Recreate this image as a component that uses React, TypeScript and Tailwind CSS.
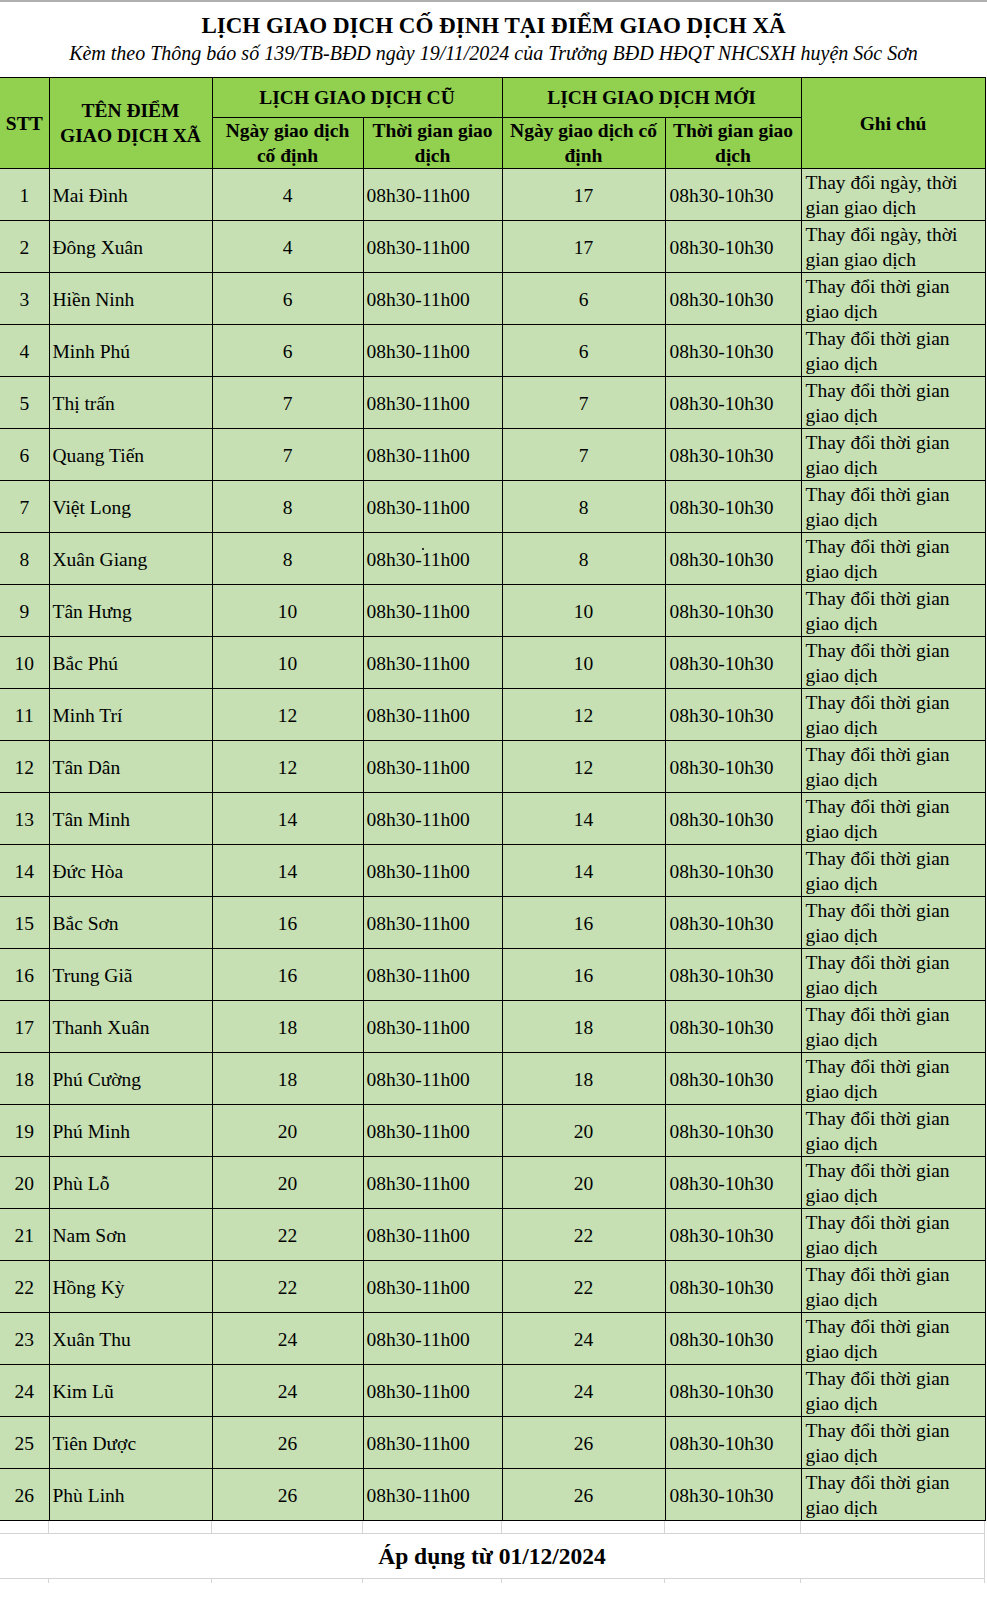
import React from 'react';

type Row = {
  stt: number;
  name: string;
  oldDay: number;
  newDay: number;
};

const rows: Row[] = [
  { stt: 1, name: 'Mai Đình', oldDay: 4, newDay: 17 },
  { stt: 2, name: 'Đông Xuân', oldDay: 4, newDay: 17 },
  { stt: 3, name: 'Hiền Ninh', oldDay: 6, newDay: 6 },
  { stt: 4, name: 'Minh Phú', oldDay: 6, newDay: 6 },
  { stt: 5, name: 'Thị trấn', oldDay: 7, newDay: 7 },
  { stt: 6, name: 'Quang Tiến', oldDay: 7, newDay: 7 },
  { stt: 7, name: 'Việt Long', oldDay: 8, newDay: 8 },
  { stt: 8, name: 'Xuân Giang', oldDay: 8, newDay: 8 },
  { stt: 9, name: 'Tân Hưng', oldDay: 10, newDay: 10 },
  { stt: 10, name: 'Bắc Phú', oldDay: 10, newDay: 10 },
  { stt: 11, name: 'Minh Trí', oldDay: 12, newDay: 12 },
  { stt: 12, name: 'Tân Dân', oldDay: 12, newDay: 12 },
  { stt: 13, name: 'Tân Minh', oldDay: 14, newDay: 14 },
  { stt: 14, name: 'Đức Hòa', oldDay: 14, newDay: 14 },
  { stt: 15, name: 'Bắc Sơn', oldDay: 16, newDay: 16 },
  { stt: 16, name: 'Trung Giã', oldDay: 16, newDay: 16 },
  { stt: 17, name: 'Thanh Xuân', oldDay: 18, newDay: 18 },
  { stt: 18, name: 'Phú Cường', oldDay: 18, newDay: 18 },
  { stt: 19, name: 'Phú Minh', oldDay: 20, newDay: 20 },
  { stt: 20, name: 'Phù Lỗ', oldDay: 20, newDay: 20 },
  { stt: 21, name: 'Nam Sơn', oldDay: 22, newDay: 22 },
  { stt: 22, name: 'Hồng Kỳ', oldDay: 22, newDay: 22 },
  { stt: 23, name: 'Xuân Thu', oldDay: 24, newDay: 24 },
  { stt: 24, name: 'Kim Lũ', oldDay: 24, newDay: 24 },
  { stt: 25, name: 'Tiên Dược', oldDay: 26, newDay: 26 },
  { stt: 26, name: 'Phù Linh', oldDay: 26, newDay: 26 },
];

const cols = 'grid grid-cols-[49px_163px_151px_139px_163px_136px_184px]';

export default function App() {
  return (
    <div className="w-[987px] min-h-[1612px] bg-white text-black font-['Liberation_Serif',serif]">
      <div className="h-[2px] bg-[#b0b0b0]"></div>

      {/* Title */}
      <div className="h-[75px] flex flex-col items-center">
        <h1 className="mt-[10px] text-[23px] leading-[28px] font-bold">
          LỊCH GIAO DỊCH CỐ ĐỊNH TẠI ĐIỂM GIAO DỊCH XÃ
        </h1>
        <p className="mt-[1px] text-[20px] leading-[24px] italic">
          Kèm theo Thông báo số 139/TB-BĐD ngày 19/11/2024 của Trưởng BĐD HĐQT NHCSXH huyện Sóc Sơn
        </p>
      </div>

      {/* Schedule table */}
      <table className="table-fixed border-collapse w-[985px] text-[19.5px] leading-[25px]">
        <colgroup>
          <col className="w-[49px]" />
          <col className="w-[163px]" />
          <col className="w-[151px]" />
          <col className="w-[139px]" />
          <col className="w-[163px]" />
          <col className="w-[136px]" />
          <col className="w-[184px]" />
        </colgroup>
        <thead className="bg-[#92d050] font-bold">
          <tr className="h-[40px]">
            <th rowSpan={2} className="border border-black border-l-0 p-0 align-middle">STT</th>
            <th rowSpan={2} className="border border-black p-0 align-middle">
              TÊN ĐIỂM
              <br />
              GIAO DỊCH XÃ
            </th>
            <th colSpan={2} className="border border-black p-0 align-middle">LỊCH GIAO DỊCH CŨ</th>
            <th colSpan={2} className="border border-black p-0 align-middle">LỊCH GIAO DỊCH MỚI</th>
            <th rowSpan={2} className="border border-black p-0 align-middle">Ghi chú</th>
          </tr>
          <tr className="h-[51px]">
            <th className="border border-black p-0 align-middle">
              Ngày giao dịch
              <br />
              cố định
            </th>
            <th className="border border-black p-0 align-middle">
              Thời gian giao
              <br />
              dịch
            </th>
            <th className="border border-black p-0 align-middle">
              Ngày giao dịch cố
              <br />
              định
            </th>
            <th className="border border-black p-0 align-middle">
              Thời gian giao
              <br />
              dịch
            </th>
          </tr>
        </thead>
        <tbody className="bg-[#c6e0b4]">
          {rows.map((r) => (
            <tr key={r.stt} className="h-[52px]">
              <td className="border border-black border-l-0 p-0 pt-[1px] text-center align-middle">{r.stt}</td>
              <td className="border border-black pt-[1px] pb-0 pl-[3px] pr-0 align-middle whitespace-nowrap">{r.name}</td>
              <td className="border border-black p-0 pt-[1px] text-center align-middle">{r.oldDay}</td>
              <td className="relative border border-black pt-[1px] pb-0 pl-[3px] pr-0 align-middle whitespace-nowrap">
                {r.stt === 8 && (
                  <span className="absolute left-[58px] top-[15px] w-[2px] h-[2px] bg-[#333]"></span>
                )}
                08h30-11h00
              </td>
              <td className="border border-black p-0 pt-[1px] text-center align-middle">{r.newDay}</td>
              <td className="border border-black pt-[1px] pb-0 pl-[4px] pr-0 align-middle whitespace-nowrap">08h30-10h30</td>
              <td className="border border-black py-0 pl-[4px] pr-0 align-middle whitespace-nowrap">
                {r.stt <= 2 ? 'Thay đổi ngày, thời' : 'Thay đổi thời gian'}
                <br />
                {r.stt <= 2 ? 'gian giao dịch' : 'giao dịch'}
              </td>
            </tr>
          ))}
        </tbody>
      </table>

      {/* Spreadsheet grid below the table */}
      <div className={`${cols} h-[13px] w-[985px] border-b border-[#d4d4d4]`}>
        {Array.from({ length: 7 }).map((_, i) => (
          <div key={i} className="border-r border-[#d4d4d4]"></div>
        ))}
      </div>
      <div className="h-[45px] w-[985px] flex items-center justify-center border-b border-r border-[#d4d4d4]">
        <span className="text-[23.5px] font-bold pt-[2px]">Áp dụng từ 01/12/2024</span>
      </div>
      <div className={`${cols} h-[4px] w-[985px]`}>
        {Array.from({ length: 7 }).map((_, i) => (
          <div key={i} className="border-r border-[#d4d4d4]"></div>
        ))}
      </div>
    </div>
  );
}
